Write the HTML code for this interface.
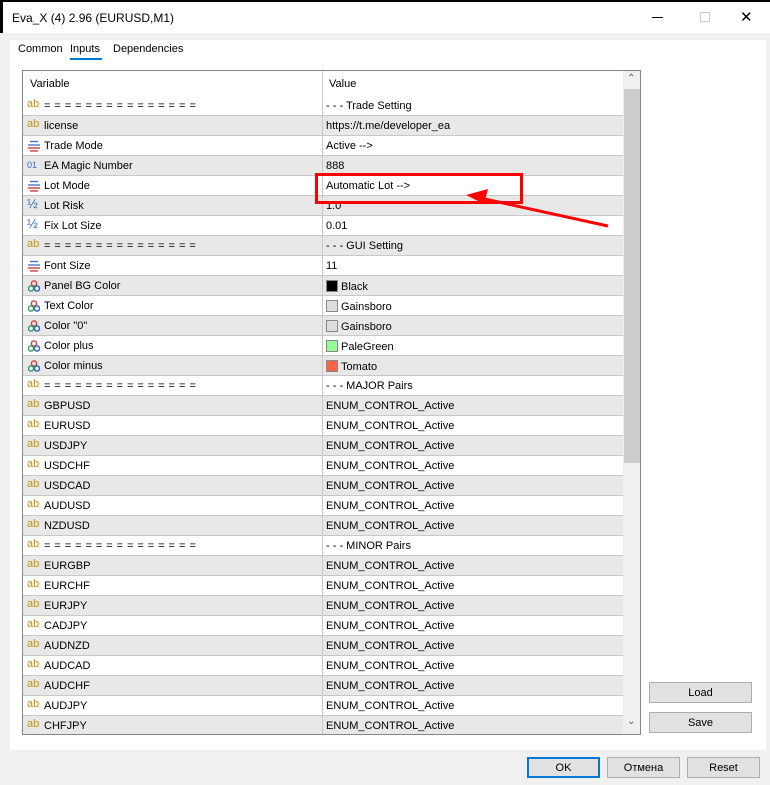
<!DOCTYPE html>
<html><head><meta charset="utf-8"><style>
*{margin:0;padding:0;box-sizing:border-box}
body{width:770px;height:785px;background:#f0f0f0;font-family:"Liberation Sans",sans-serif;font-size:11px;color:#000;position:relative;overflow:hidden}
.abs{position:absolute}
#title{left:0;top:0;width:770px;height:33px;background:#fff;border-top:2px solid #000;border-left:3px solid #000}
#title span{position:absolute;left:9px;top:9px;font-size:12px}
#panel{left:10px;top:40px;width:756px;height:710px;background:#fff}
.tab{top:43px;font-size:11px}
#grid{left:22px;top:70px;width:619px;height:665px;border:1px solid #828790;background:#fff;overflow:hidden}
.row{position:absolute;left:0;width:600px;height:20px;border-bottom:1px solid #c8c8c8}
.row.g{background:#e8e8e8}
.row .n{position:absolute;left:21px;top:4px;white-space:nowrap}
.row .v{position:absolute;left:303px;top:4px;white-space:nowrap}
.row .d{position:absolute;left:299px;top:0;width:1px;height:20px;background:#c8c8c8}
.ic{position:absolute;left:4px;top:2px;font-size:11px}
svg.ic{left:5px;top:4px}
.ab{color:#c8900a}
.eq{letter-spacing:0.45px}
.sw{display:inline-block;width:12px;height:12px;border:1px solid #888;vertical-align:-2px;margin-right:3px}
.btn{position:absolute;background:#e1e1e1;border:1px solid #adadad;text-align:center;font-size:11px;display:flex;align-items:center;justify-content:center}
</style></head><body>
<div id="title" class="abs"><span>Eva_X (4) 2.96 (EURUSD,M1)</span>
<div class="abs" style="left:649px;top:15px;width:11px;height:1px;background:#000"></div>
<div class="abs" style="left:697px;top:10px;width:10px;height:10px;border:1px solid #ccc"></div>
<div class="abs" style="left:737px;top:6px;font-size:15px;color:#000">✕</div>
</div>
<div id="panel" class="abs"></div>
<div class="abs tab" style="left:18px">Common</div>
<div class="abs tab" style="left:70px">Inputs</div>
<div class="abs" style="left:70px;top:58px;width:32px;height:2px;background:#0078d7"></div>
<div class="abs tab" style="left:113px">Dependencies</div>
<div id="grid" class="abs">
<div class="abs" style="left:0;top:0;width:600px;height:25px;background:#fff"><span class="abs" style="left:7px;top:7px">Variable</span><div class="abs" style="left:299px;top:0;width:1px;height:25px;background:#ccc"></div><span class="abs" style="left:306px;top:7px">Value</span></div>
<div id="rows"></div>
<div class="abs" style="left:600px;top:0;width:18px;height:665px;background:#f0f0f0"></div>
<div class="abs" style="left:601px;top:18px;width:16px;height:374px;background:#cdcdcd"></div>
<div class="abs" style="left:604px;top:2px;font-size:10px;color:#606060">&#8963;</div>
<div class="abs" style="left:604px;top:645px;font-size:10px;color:#606060">&#8964;</div>
</div>
<div class="btn" style="left:649px;top:682px;width:103px;height:21px">Load</div>
<div class="btn" style="left:649px;top:712px;width:103px;height:21px">Save</div>
<div class="btn" style="left:527px;top:757px;width:73px;height:21px;border:2px solid #0078d7">OK</div>
<div class="btn" style="left:607px;top:757px;width:73px;height:21px">Отмена</div>
<div class="btn" style="left:687px;top:757px;width:73px;height:21px">Reset</div>
<div class="abs" style="left:315px;top:173px;width:208px;height:31px;border:3px solid #f00"></div>
<svg class="abs" style="left:0;top:0" width="770" height="785"><line x1="608" y1="226" x2="480" y2="198" stroke="#f00" stroke-width="3"/><polygon points="466,195 488,189 484,204" fill="#f00"/></svg>
<script>
const E='ENUM_CONTROL_Active';
const ab='<span class="ic ab">ab</span>';
const en='<svg class="ic" width="12" height="12"><line x1="2" y1="1.5" x2="10" y2="1.5" stroke="#3a6fc4" stroke-width="1.3"/><line x1="0" y1="5" x2="12" y2="5" stroke="#3a6fc4" stroke-width="1.3"/><line x1="0" y1="8" x2="12" y2="8" stroke="#d03030" stroke-width="1.3"/><line x1="2" y1="11" x2="10" y2="11" stroke="#d03030" stroke-width="1.3"/></svg>';
const o1='<span class="ic" style="color:#3070c0;font-size:9px;top:4px">01</span>';
const hf='<span class="ic" style="color:#3070c0;font-size:13px;top:0">½</span>';
const co='<svg class="ic" width="12" height="12"><circle cx="6" cy="3.5" r="2.6" fill="none" stroke="#d04040" stroke-width="1.4"/><circle cx="3" cy="8.5" r="2.6" fill="none" stroke="#30a050" stroke-width="1.4"/><circle cx="9" cy="8.5" r="2.6" fill="none" stroke="#3060d0" stroke-width="1.4"/></svg>';
const eq='<span class="eq">= = = = = = = = = = = = = = =</span>';
const sw=c=>'<span class="sw" style="background:'+c+'"></span>';
const R=[[ab,eq,'- - - Trade Setting'],[ab,'license','https://t.me/developer_ea'],[en,'Trade Mode','Active -->'],[o1,'EA Magic Number','888'],[en,'Lot Mode','Automatic Lot -->'],[hf,'Lot Risk','1.0'],[hf,'Fix Lot Size','0.01'],[ab,eq,'- - - GUI Setting'],[en,'Font Size','11'],[co,'Panel BG Color',sw('#000')+'Black'],[co,'Text Color',sw('#dcdcdc')+'Gainsboro'],[co,'Color "0"',sw('#dcdcdc')+'Gainsboro'],[co,'Color plus',sw('#98fb98')+'PaleGreen'],[co,'Color minus',sw('#ff6347')+'Tomato'],[ab,eq,'- - - MAJOR Pairs'],
[ab,'GBPUSD',E],[ab,'EURUSD',E],[ab,'USDJPY',E],[ab,'USDCHF',E],[ab,'USDCAD',E],[ab,'AUDUSD',E],[ab,'NZDUSD',E],[ab,eq,'- - - MINOR Pairs'],[ab,'EURGBP',E],[ab,'EURCHF',E],[ab,'EURJPY',E],[ab,'CADJPY',E],[ab,'AUDNZD',E],[ab,'AUDCAD',E],[ab,'AUDCHF',E],[ab,'AUDJPY',E],[ab,'CHFJPY',E]];
let h='';R.forEach((r,i)=>{h+='<div class="row'+(i%2?' g':'')+'" style="top:'+(25+i*20)+'px">'+r[0]+'<span class="n">'+r[1]+'</span><div class="d"></div><span class="v">'+r[2]+'</span></div>'});
document.getElementById('rows').innerHTML=h;
</script>
</body></html>
